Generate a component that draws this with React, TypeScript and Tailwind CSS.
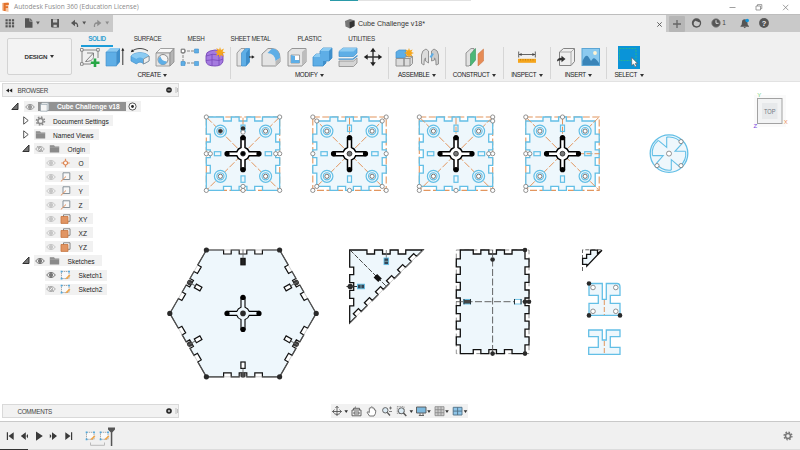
import React from "react";

type P = [number, number];
const BLUE = "#63bfe6";
const ORANGE = "#e2965f";
const FILL = "#eef7fc";

/* ---------- geometry helpers ---------- */

// Points along a straight edge with rectangular notches; positive depth cuts to the right of travel.
function edge(a: P, b: P, at: number[], w: number, depth: number): P[] {
  const len = Math.hypot(b[0] - a[0], b[1] - a[1]);
  const ux = (b[0] - a[0]) / len;
  const uy = (b[1] - a[1]) / len;
  const pt = (t: number, d: number): P => [a[0] + ux * t - uy * d, a[1] + uy * t + ux * d];
  const out: P[] = [a];
  at.forEach((c) => {
    const m = len / 2 + c;
    out.push(pt(m - w / 2, 0), pt(m - w / 2, depth), pt(m + w / 2, depth), pt(m + w / 2, 0));
  });
  return out;
}
const str = (p: P[]) => p.map((q) => q[0].toFixed(2) + "," + q[1].toFixed(2)).join(" ");
const THREE = [-15.6, 0, 15.6];

function Ring({ x, y, r = 2.1 }: { x: number; y: number; r?: number }) {
  return <circle cx={x} cy={y} r={r} fill="#fff" stroke="#777" strokeWidth=".8" />;
}
function Dot({ x, y, r = 2.3 }: { x: number; y: number; r?: number }) {
  return <circle cx={x} cy={y} r={r} fill="#2a2a2a" />;
}

function Cross({ x, y, thin }: { x: number; y: number; thin?: boolean }) {
  return (
    <g transform={`translate(${x} ${y})`}>
      <path
        d="M-2-16V-6.2A6.5 6.5 0 0 0-6.2-2H-16V2H-6.2A6.5 6.5 0 0 0-2 6.2V16H2V6.2A6.5 6.5 0 0 0 6.2 2H16V-2H6.2A6.5 6.5 0 0 0 2-6.2V-16Z"
        fill={thin ? FILL : "#fff"}
        stroke="#000"
        strokeWidth={thin ? 1.1 : 1.5}
      />
      <circle cx="0" cy="-16" r="2.6" />
      <circle cx="0" cy="16" r="2.6" />
      <circle cx="-16" cy="0" r="2.6" />
      <circle cx="16" cy="0" r="2.6" />
    </g>
  );
}

type PlateProps = { x: number; inset: [number, number, number, number]; rings: P[]; dark?: boolean };

// Square plate: inset gives the side offsets (top, right, bottom, left); inset sides carry outward tabs.
function Plate({ x, inset, rings, dark }: PlateProps) {
  const [t, r, b, l] = inset;
  const L = -36.7 + l;
  const R = 36.7 - r;
  const T = -36.7 + t;
  const B = 36.7 - b;
  // Notches stay centred on the plate even where one end of a side is inset.
  const mk = (a: P, c: P, ins: number, shift: number) =>
    edge(a, c, THREE.map((v) => v + shift), 7.8, ins ? -4 : 4);
  const pts = [
    ...mk([L, T], [R, T], t, -(L + R) / 2),
    ...mk([R, T], [R, B], r, -(T + B) / 2),
    ...mk([R, B], [L, B], b, (L + R) / 2),
    ...mk([L, B], [L, T], l, (T + B) / 2),
  ];
  return (
    <g transform={`translate(${x} 153.7)`}>
      <rect x="-36.7" y="-36.7" width="73.4" height="73.4" fill="none" stroke={ORANGE} strokeWidth="1.1" strokeDasharray="7 2.5" />
      <polygon points={str(pts)} fill={FILL} stroke={BLUE} strokeWidth="1.3" />
      <path d="M-36-36L36 36M36-36L-36 36M0-36V-8" stroke={ORANGE} strokeWidth="1" strokeDasharray="7 2" fill="none" />
      {l === 0 && r > 0 && <path d="M8 0H37" stroke={ORANGE} strokeWidth="1" strokeDasharray="6 2" />}
      {[[-22.6, -22.6], [22.6, -22.6], [-22.6, 22.6], [22.6, 22.6]].map(([cx, cy], i) => (
        <g key={i}>
          <circle cx={cx} cy={cy} r="6" fill={FILL} stroke={BLUE} strokeWidth="1.2" />
          <circle cx={cx} cy={cy} r="3.6" fill={FILL} stroke={BLUE} strokeWidth="1.1" />
          <circle cx={cx} cy={cy} r="2.1" fill={dark && i === 0 ? "#333" : "#fff"} stroke="#666" strokeWidth=".9" />
        </g>
      ))}
      <g fill="none" stroke={BLUE} strokeWidth="1.2">
        <rect x="-28.6" y="-2" width="6.4" height="4" />
        <rect x="22.2" y="-2" width="6.4" height="4" />
        <rect x="-2" y="-28.6" width="4" height="6.4" />
        <rect x="-2" y="22.2" width="4" height="6.4" />
      </g>
      <Cross x={0} y={0} />
      <circle r="2.4" fill={dark ? "#000" : "#777"} stroke="#222" strokeWidth=".8" />
      {dark && <Dot x={0} y={-25.3} r={2.2} />}
      {rings.map(([a, c], i) => (
        <Ring key={i} x={a} y={c} />
      ))}
    </g>
  );
}

function Hexagon() {
  const s = 36.6;
  const h = 63.4;
  const v: P[] = [[-s, -h], [s, -h], [73.2, 0], [s, h], [-s, h], [-73.2, 0]];
  const pts = v.flatMap((p, i) => edge(p, v[(i + 1) % 6], THREE, 7.6, 4));
  return (
    <g transform="translate(243 313.4)">
      <polygon points={str(pts)} fill={FILL} stroke="#111" strokeWidth="1.2" />
      <polygon points={str(v)} fill="none" stroke="#999" strokeWidth=".5" />
      {[0, 60, 120, 180, 240, 300].map((a) => (
        <g key={a} transform={`rotate(${a})`}>
          <rect x="-2.1" y="-55" width="4.2" height="6.4" fill={a === 0 ? "#222" : "#fff"} stroke="#111" strokeWidth="1.2" />
          {a !== 0 && <circle cx="0" cy="-61.5" r="2.7" fill="#3a3a3a" />}
          <path d="M0-64V-55" stroke="#666" strokeWidth=".9" />
        </g>
      ))}
      {v.map((p, i) => (
        <Dot key={i} x={p[0]} y={p[1]} r={2.6} />
      ))}
      <Cross x={0} y={0} thin />
      <Dot x={0} y={0} r={2.8} />
    </g>
  );
}

function Triangle() {
  const pts = [
    ...edge([349.7, 250], [423, 250], THREE, 7.6, 4),
    ...edge([423, 250], [349.7, 323], [-39, -23.4, -7.8, 7.8, 23.4, 39], 7.2, 4),
    ...edge([349.7, 323], [349.7, 250], THREE, 7.6, 4),
  ];
  return (
    <g>
      <polygon points={str(pts)} fill={FILL} stroke="#111" strokeWidth="1.3" />
      <path d="M423 250L349.7 323" stroke="#aaa" strokeWidth=".6" />
      <path d="M350 250L386 286" stroke="#333" strokeWidth=".9" strokeDasharray="5 1.5" />
      <path d="M386.3 250V258" stroke="#777" strokeWidth=".9" />
      <rect x="384" y="258" width="4.6" height="6.6" fill="#345" stroke={BLUE} strokeWidth=".9" />
      <rect x="357.5" y="284.2" width="7" height="4.6" fill="#345" stroke={BLUE} strokeWidth=".9" />
      <path d="M384.5 261.3H388M361 284.5V288.5" stroke="#9cc" strokeWidth=".7" />
      <Dot x={350.3} y={286.5} r={2.7} />
      <path d="M346.5 286.5H357" stroke="#333" strokeWidth="1" />
      <rect x="-3.3" y="-2.5" width="6.6" height="5" fill="#111" transform="translate(377.7 278) rotate(45)" />
    </g>
  );
}

function Panel() {
  const side = [-39, -23.4, -7.8, 7.8, 23.4, 39];
  const pts = [
    ...edge([460.3, 250], [525, 250], THREE, 7.6, 4),
    ...edge([525, 250], [525, 353.6], side, 8, -4),
    ...edge([525, 353.6], [460.3, 353.6], THREE, 7.6, 4),
    ...edge([460.3, 353.6], [460.3, 250], side, 8, -4),
  ];
  return (
    <g>
      <rect x="456.3" y="250" width="72.7" height="103.6" fill="none" stroke="#777" strokeWidth=".8" strokeDasharray="5 3" />
      <polygon points={str(pts)} fill={FILL} stroke="#111" strokeWidth="1.3" />
      <path d="M492.6 250V353M456 301.7H529" stroke="#555" strokeWidth=".9" strokeDasharray="7 2.5" />
      <rect x="463.8" y="299.4" width="6.8" height="4.6" fill="#444" stroke={BLUE} strokeWidth=".9" />
      <rect x="514.4" y="299.4" width="6.8" height="4.6" fill="#fff" stroke={BLUE} strokeWidth=".9" />
      <path d="M464 299V304.3M470.5 299V304.3M514.5 299V304.3M521 299V304.3" stroke="#222" strokeWidth=".9" />
      {[[492.6, 259.5], [525, 250], [525, 353.6], [492.6, 353.6], [525, 301.7], [529, 301.7]].map(([x, y], i) => (
        <Dot key={i} x={x} y={y} />
      ))}
    </g>
  );
}

function Disc() {
  return (
    <g transform="translate(669 153.6)" fill="none" stroke={BLUE} strokeWidth="1.3">
      <circle r="18.8" fill={FILL} />
      <g strokeWidth="1.1">
        <path d="M-2.3-16.5V-6.3L-10.7-13.3M16.6-2.3H6L13-10M2.3 16.5V6L10.5 13M-16.6 2H-5.8L-12.8 10" />
        <path d="M-2.3-16.5A16.7 16.7 0 0 1 13-10M16.6-2.3A16.7 16.7 0 0 1 10.5 13M2.3 16.5A16.7 16.7 0 0 1-12.8 10M-16.6 2A16.7 16.7 0 0 1-10.7-13.3" />
      </g>
      <Ring x={0} y={0} r={2.5} />
      <Ring x={12} y={-12} />
      <Ring x={12} y={12} />
      <Ring x={-12} y={12} />
    </g>
  );
}

function SmallParts() {
  return (
    <g>
      <path d="M582.5 271V249.8H602" fill="none" stroke="#555" strokeWidth=".9" strokeDasharray="4 2" />
      <path d="M582.6 258.4H586.6V254.3H590.6V250.2H597.5V253.6L602 250.2L586.8 266.2V264.4H582.6Z" fill={FILL} stroke="#111" strokeWidth="1.3" />
      <g fill={FILL} stroke={BLUE} strokeWidth="1.3">
        <path d="M589 283.5H602.3V299.3H606.3V283.5H617Q620 283.5 620 287V295.3H610.3V303.3H620V315.4H589V303.3H598.3V295.3H589Z" />
        <path d="M588.7 330H602.3V340H606.3V330H620V336.7H610.3V347.3H620V354.3H588.7V347.3H598.3V336.7H588.7Z" />
      </g>
      <path d="M604.3 300V315M604.3 341V354" stroke={ORANGE} strokeWidth="1" strokeDasharray="5 2" />
      <Ring x={593} y={287.5} r={2.3} />
      <Ring x={615.8} y={287.5} r={2.3} />
      <Ring x={593} y={311.3} r={2.3} />
      <Ring x={615.8} y={311.3} r={2.3} />
      <Dot x={589} y={283.5} />
      <Dot x={589} y={315.4} />
      <Dot x={620} y={315.4} />
    </g>
  );
}

function ViewCube() {
  return (
    <g fontFamily="Liberation Sans, sans-serif">
      <rect x="754" y="95" width="32" height="32" fill="#fafafa" />
      <rect x="757.5" y="98.5" width="24.5" height="25" fill="#f2f3f4" stroke="#a2a2a2" strokeWidth="1" />
      <rect x="762" y="103" width="15.5" height="16" fill="#e7e9eb" />
      <text x="764" y="113.7" fontSize="6.5" fill="#6f777e" textLength="11.5" lengthAdjust="spacingAndGlyphs">TOP</text>
      <text x="757.2" y="97.3" fontSize="6" fill="#74d380">Y</text>
      <text x="783.8" y="124" fontSize="6" fill="#ea935f">X</text>
      <text x="753.6" y="127.5" fontSize="6" fill="#7b45e0">Z</text>
    </g>
  );
}

function Drawing() {
  return (
    <svg className="absolute inset-0" width="800" height="339" viewBox="0 82 800 339">
      <Plate
        x={243}
        inset={[0, 0, 0, 0]}
        dark
        rings={[[-36.7, -36.7], [36.7, -36.7], [-36.7, 36.7], [36.7, 36.7], [-36.7, 0], [-32.7, 0], [36.7, 0], [32.7, 0], [0, 32.7], [0, 36.7], [0, -21.5]]}
      />
      <Plate
        x={349.5}
        inset={[4, 4, 4, 4]}
        rings={[[-36.7, -36.7], [36.7, -36.7], [-36.7, 36.7], [36.7, 36.7], [-32.7, -32.7], [32.7, -32.7], [-32.7, 32.7], [32.7, 32.7], [-36.7, 0], [36.7, 0], [0, 36.7]]}
      />
      <Plate
        x={456}
        inset={[4, 0, 4, 0]}
        rings={[[-36.7, -36.7], [36.7, -36.7], [36.7, -32.7], [-36.7, 32.7], [-36.7, 36.7], [36.7, 36.7], [32.7, 0], [36.7, 0], [0, 36.7]]}
      />
      <Plate
        x={562.5}
        inset={[4, 4, 4, 0]}
        rings={[[-36.7, -36.7], [0, -36.7], [-36.7, 0], [-32.7, 0], [-36.7, 32.7], [-36.7, 36.7]]}
      />
      <Disc />
      <Hexagon />
      <Triangle />
      <Panel />
      <SmallParts />
      <ViewCube />
    </svg>
  );
}

/* ---------- toolbar icons (20 x 20) ---------- */

const G1 = "#e4e4e4";
const GS = "#8b8b8b";
const B1 = "#5eaee6";
const B2 = "#3f8fcb";
const B3 = "#8ccbf2";

const ICONS: Record<string, React.ReactNode> = {
  sketch: (
    <>
      <path d="M2 3V17H11M2 3H18V11" fill="none" stroke="#777" strokeWidth=".9" />
      <path d="M.5 1.5h2.6v2.6H.5zM16.7 1.5h2.6v2.6h-2.6zM.5 15.7h2.6v2.6H.5z" fill="#fff" stroke="#666" strokeWidth=".7" />
      <path d="M5.5 14.5L13.5 6V9.5C13.5 12.5 10.5 14.5 5.5 14.5ZM7 6H13.5" fill="none" stroke="#777" strokeWidth=".9" />
      <path d="M15 11.5V20M10.8 15.8H19.5" stroke="#27a745" strokeWidth="2.6" />
    </>
  ),
  extrude: (
    <>
      <path d="M1 5L5 1H15L11.5 5Z" fill={B3} />
      <path d="M1 5H11.5V19H1Z" fill={B1} stroke={B2} strokeWidth=".6" />
      <path d="M11.5 5L15 1V15L11.5 19Z" fill={B2} />
      <path d="M17.8 18V3" stroke="#333" strokeWidth="1" />
      <path d="M17.8 .8L16.3 3.8H19.3Z" fill="#222" />
    </>
  ),
  revolve: (
    <>
      <path d="M1 9C5 4.5 15 4.5 19 9V14L13.5 17C12 14.6 8 14.6 6.5 17L1 14Z" fill={B1} stroke={B2} strokeWidth=".7" />
      <path d="M1 9C5 4.5 15 4.5 19 9L13.5 12C12 10 8 10 6.5 12Z" fill={B3} />
      <path d="M13.5 12L19 9V14L13.5 17Z" fill="#eee" stroke="#777" strokeWidth=".6" />
      <path d="M2 4C7 .7 13 .7 18 4" fill="none" stroke="#333" strokeWidth=".9" />
      <path d="M.8 5.3L2 2.3L4.2 4.6Z" fill="#222" />
    </>
  ),
  hole: (
    <>
      <path d="M1 6L5.5 1.5H19L15 6Z" fill="#f7f7f7" stroke={GS} strokeWidth=".8" />
      <path d="M1 6H15V19H1Z" fill={G1} stroke={GS} strokeWidth=".8" />
      <path d="M15 6L19 1.5V15L15 19Z" fill="#b5b5b5" stroke={GS} strokeWidth=".8" />
      <circle cx="8" cy="12.5" r="5" fill="#f5f5f5" stroke="#888" />
      <path d="M5.5 9.2A4.5 4.5 0 1 0 12 14.4Q6 14 5.5 9.2Z" fill={B1} />
    </>
  ),
  pattern: (
    <>
      <path d="M3 4V16M3 4H17M3 16H17" stroke="#888" strokeDasharray="3 1" />
      <path d="M1.2 2.2h3.6v3.6H1.2z" fill="#fff" stroke="#666" />
      <path d="M14.5 2h4v4h-4zM14.5 14.5h4v4h-4zM1 14.5h4v4H1z" fill={B1} stroke={B2} strokeWidth=".6" />
    </>
  ),
  form: (
    <>
      <path d="M1 9Q1 5 5 4L10 3Q17 3 18 8V14Q17 19 10 19Q1 19 1 14Z" fill="#a57be0" stroke="#7747b8" strokeWidth=".9" />
      <path d="M1 9Q8 6 14 8L18 7L14 8V18" fill="none" stroke="#7747b8" strokeWidth=".8" />
      <path d="M7 7V19M1 13.5Q8 12 14 13.5L18 12" stroke="#7747b8" strokeWidth=".8" fill="none" />
      <path d="M15 0L16 3L19 1.5L17.6 4.6L20.5 5.7L17.5 6.6L18.8 9.7L15.8 8L14.8 10.8L13.8 7.8L10.8 9L12.4 6L9.7 4.8L12.6 4L11.3 1L14.2 2.8Z" fill="#f5a51c" />
    </>
  ),
  press: (
    <>
      <path d="M1 6L5 1.5H9V15L5 19H1Z" fill={G1} stroke={GS} strokeWidth=".8" />
      <path d="M5.5 6L9.5 1.5H13.5V15L10 19H5.5Z" fill={B1} stroke={B2} strokeWidth=".7" />
      <path d="M10 6L13.5 1.5V15L10 19Z" fill={B2} />
      <path d="M13 10H16.5" stroke="#222" strokeWidth="1" />
      <path d="M15.8 8.2L18.6 10L15.8 11.8Z" fill="#222" />
    </>
  ),
  fillet: (
    <>
      <path d="M1 7L7 1.5H11Q19 2 19 11V15L14.5 19H1Z" fill={G1} stroke={GS} strokeWidth=".9" />
      <path d="M6.5 6L11 1.5Q19 2 19 11L14.5 14Q14 6.5 6.5 6Z" fill={B1} />
      <path d="M14.5 14L19 11V15L14.5 19Z" fill="#b9b9b9" />
    </>
  ),
  shell: (
    <>
      <path d="M1 5L5 1.5H19V15L15 19H1Z" fill={G1} stroke={GS} strokeWidth=".9" />
      <path d="M15 5L19 1.5V15L15 19Z" fill="#bdbdbd" />
      <path d="M4 8H12.5V16H4Z" fill="#fff" stroke={GS} strokeWidth=".8" />
      <path d="M4 8L8 9V13H12.5V16H4Z" fill={B1} />
    </>
  ),
  combine: (
    <>
      <path d="M1 10L4 7H8V4L11 1H20V11L17 14H14V16L11 19H1Z" fill={B1} stroke={B2} strokeWidth=".8" />
      <path d="M1 10L4 7H8V4L11 1H20L17 4H8V10Z" fill={B3} />
      <path d="M17 4L20 1V11L17 14ZM11 14H14V16L11 19Z" fill={B2} />
    </>
  ),
  split: (
    <>
      <path d="M1 4.5L5 1H19V6L15.5 9.5H1Z" fill={B1} stroke={B2} strokeWidth=".7" />
      <path d="M1 4.5L5 1H19L15.5 4.5Z" fill={B3} />
      <path d="M.5 12.2H15L19.5 8.5" stroke={B2} strokeWidth="1.2" fill="none" />
      <path d="M1 14H15.5L19 11V16L15.5 19.5H1Z" fill="#d5d5d5" stroke={GS} strokeWidth=".8" />
    </>
  ),
  move: (
    <>
      <path d="M10 3V17M3 10H17" stroke="#333" strokeWidth="1.4" />
      <path d="M10 .8L12.8 4.7H7.2ZM10 19.2L12.8 15.3H7.2ZM.8 10L4.7 7.2V12.8ZM19.2 10L15.3 7.2V12.8Z" fill="#222" />
    </>
  ),
  component: (
    <>
      <path d="M2 5L5 3H12V11H2Z" fill={B1} stroke={B2} strokeWidth=".7" />
      <path d="M2 11.5H10V19H2ZM10 11.5L12 9.5H18.5V16.5L16 19H10Z" fill="#dcdcdc" stroke={GS} strokeWidth=".9" />
      <path d="M10 11.5H16V19M16 11.5L18.5 9.5" fill="none" stroke={GS} strokeWidth=".9" />
      <path d="M15 1L15.9 3.6L18.6 2.4L17.3 5L20 6L17.3 7L18.5 9.6L15.9 8.4L15 11L14.1 8.4L11.5 9.6L12.7 7L10 6L12.7 5L11.5 2.4L14.1 3.6Z" fill="#f5a51c" />
    </>
  ),
  joint: (
    <>
      <path d="M1.5 8Q2 3 6 2L8.5 4V16L5.5 14V11Q4 11 4 18L1.5 16.5Z" fill="#ddd" stroke={GS} strokeWidth=".9" />
      <path d="M18.5 8Q18 3 14 2L11.5 4V14L14.5 13V11Q16 11 16 18L18.5 17Z" fill="#ccc" stroke={GS} strokeWidth=".9" />
      <path d="M10.5 10.5L13 6.5" stroke={B1} strokeWidth="2.2" />
    </>
  ),
  plane: (
    <>
      <path d="M1 6L6 1.5H9V14L4 19H1Z" fill="#e1e1e1" stroke={GS} strokeWidth=".9" />
      <path d="M5.5 7L10.5 1.5V13L5.5 19Z" fill="#4cb777" stroke="#35945c" strokeWidth=".6" />
      <path d="M13 7L18.5 2V14L13 19Z" fill="#e68b55" stroke="#c96f3b" strokeWidth=".5" />
    </>
  ),
  measure: (
    <>
      <path d="M1.7 4.5V10.5M18.3 4.5V10.5M2 7.5H18" stroke="#555" strokeWidth=".9" />
      <path d="M2 7.5L4.6 6V9ZM18 7.5L15.4 6V9Z" fill="#444" />
      <rect x="1" y="11.8" width="18" height="4" fill="#f5a51c" />
      <path d="M3.5 12v1.5M6 12v1.5M8.5 12v1.5M11 12v1.5M13.5 12v1.5M16 12v1.5" stroke="#b87a10" strokeWidth=".7" />
    </>
  ),
  insert: (
    <>
      <path d="M3.5 5L7.5 1.5H18.5V14.5L15 18.5H3.5Z" fill="#efefef" stroke="#777" strokeWidth=".9" />
      <path d="M3.5 5H15V18.5M15 5L18.5 1.5" fill="none" stroke="#999" strokeWidth=".8" />
      <path d="M1 14.5Q1 10.8 5.5 10.8V8.7L9.5 12L5.5 15.3V13.3Q3 13.2 1 14.5Z" fill="#333" />
    </>
  ),
  image: (
    <>
      <rect x="1" y="1.5" width="17.5" height="17" fill="#8bcaf0" stroke="#5ba5d4" />
      <path d="M1.5 14Q5 6 7.5 10L10 14L12 11.5Q14 10 18 16V18H1.5Z" fill="#3984b8" />
      <circle cx="14" cy="6" r="1.9" fill="#fff4d5" />
    </>
  ),
};

function Icon({ name }: { name: string }) {
  return (
    <svg width="20" height="20" viewBox="0 0 20 20" className="shrink-0 overflow-visible">
      {ICONS[name]}
    </svg>
  );
}

function SelectIcon() {
  return (
    <div className="h-[23px] w-[22px] bg-[#0a94d8]">
      <svg width="22" height="23" viewBox="0 0 22 23">
        <rect x="1.5" y="2.5" width="16.5" height="12" fill="none" stroke="#2db58b" strokeWidth=".9" strokeDasharray="2 1" />
        <path d="M13.7 11.5V19.6L15.6 18L17 20.9L18.5 20.1L17.2 17.4H19.6Z" fill="#fff" stroke="#555" strokeWidth=".6" />
      </svg>
    </div>
  );
}

function Caret() {
  return (
    <svg width="4" height="3" viewBox="0 0 4 3" className="shrink-0">
      <path d="M0 0H4L2 3Z" fill="#333" />
    </svg>
  );
}

function Group({ label, width, icons, gap, pl = "" }: { label: string; width: string; icons: string[]; gap: string; pl?: string }) {
  return (
    <div className={"flex h-[32px] flex-col items-center justify-between border-r border-[#d6d6d6] " + width + " " + pl}>
      <div className={"flex h-5 items-center " + gap}>
        {icons.map((n) => (
          <Icon key={n} name={n} />
        ))}
      </div>
      <div className="flex items-center gap-[2.5px] text-[6.3px] leading-[8px] tracking-[-0.3px] whitespace-nowrap text-[#222]">
        {label}
        <Caret />
      </div>
    </div>
  );
}

/* ---------- application bars ---------- */

function TitleBar() {
  return (
    <div className="flex h-[14px] items-center bg-white pl-[2px]">
      <svg width="8" height="10" viewBox="0 0 8 10">
        <path d="M0 1L6.5 0V10L0 8.5Z" fill="#f6c6a4" />
        <path d="M1.5 1H6.8V3H3.7V4.3H6V6.1H3.7V9H1.5Z" fill="#e3722b" />
      </svg>
      <span className="ml-[4px] w-[316px] text-[6.6px] whitespace-nowrap text-[#8b8b8b] [font-family:'Open_Sans',sans-serif]">
        Autodesk Fusion 360 (Education License)
      </span>
      <div className="h-px w-[28px] self-start bg-[#2a9aa8]" />
      <div className="h-px w-[113px] self-start bg-[#e2e2e2]" />
      <svg className="mr-[9px] ml-auto" width="62" height="10" viewBox="729 1 62 10" fill="none" stroke="#777" strokeWidth=".7">
        <path d="M729.5 6.5H735.5M783 3.8L788.3 9.2M788.3 3.8L783 9.2M756 5H760.5V9H756ZM757.5 5V3.6H761.8V7.6H760.7" />
      </svg>
    </div>
  );
}

function TabBar() {
  return (
    <div className="flex h-[18px] border-t border-[#bdbdbd] bg-[#c9c9c9]">
      <svg width="113" height="17" viewBox="0 15 113 17">
        <g fill="#555">
          {[5.5, 8.7, 11.9].map((x) => [19.2, 22.2, 25.2].map((y) => <rect key={x + "-" + y} x={x} y={y} width="2.2" height="2.2" />))}
          <path d="M25 18.3H29.5V21.5H32.5V27.8H25ZM30.2 18.3L32.5 20.8H30.2Z" />
          <path d="M36 21.5H39.8L37.9 24.5ZM82.3 21.5H86.1L84.2 24.5Z" />
          <path d="M51 19H59V27.5H51.8L51 26.7Z" />
          <path d="M71 23L75 19.8V26.2Z" />
        </g>
        <path d="M53 19.3V22.5H57.2V19.3M53.5 27V24.8H56.8V27" fill="#c9c9c9" />
        <path d="M73 23H75Q78 23 77.5 27" fill="none" stroke="#555" strokeWidth="1.3" />
        <g fill="#8c8c8c">
          <path d="M101.3 23L97.3 19.8V26.2ZM105.3 21.5H109.1L107.2 24.5Z" />
          <path d="M99 23H97Q94 23 94.5 27" fill="none" stroke="#8c8c8c" strokeWidth="1.3" />
        </g>
      </svg>
      <div className="flex flex-1 items-center bg-[#f0f0f0] pt-px pl-[232px]">
        <svg width="10" height="10" viewBox="0 0 10 10">
          <path d="M0 2L5 0L9.5 1.5V7L5 9.5L.5 7.5Z" fill="#777" />
          <path d="M4.5 3.2L9.5 1.5V7L4.8 9.5Z" fill="#333" />
        </svg>
        <span className="ml-[3px] text-[7.1px] whitespace-nowrap text-[#333]">Cube Challenge v18*</span>
        <svg className="mr-[4px] ml-auto" width="5" height="5" viewBox="0 0 5 5">
          <path d="M.3 .3L4.7 4.7M4.7 .3L.3 4.7" stroke="#555" strokeWidth=".9" />
        </svg>
      </div>
      <svg width="134" height="17" viewBox="666 15 134 17">
        <rect x="669" y="16" width="16" height="16" rx="1" fill="#b6b6b6" />
        <path d="M677 20V28M673 24H681" stroke="#666" strokeWidth="1.3" />
        <circle cx="696.5" cy="23" r="4.7" fill="#555" />
        <path d="M694 22Q696.5 19 697.5 21.7L700 22.5Q700 26 696.5 26.3Q692.8 25.8 694 22Z" fill="#c9c9c9" />
        <path d="M695.5 18.6L698 20.2L696.2 21.4Z" fill="#555" />
        <circle cx="716" cy="23" r="4.3" fill="#555" stroke="#888" strokeWidth=".8" />
        <path d="M716 20.2V23.3H718.6" fill="none" stroke="#eee" strokeWidth=".9" />
        <text x="722.3" y="25.4" fontSize="6.5" fill="#444" fontFamily="Liberation Sans, sans-serif">1</text>
        <path d="M740.5 26Q742 25 742 22Q742 19.3 744.7 19.3Q747.3 19.3 747.3 22Q747.3 25 749 26V26.7H740.5ZM743.5 27H746L744.7 28.2Z" fill="#555" />
        <circle cx="747.2" cy="20.5" r="1.8" fill="#1096dc" />
        <circle cx="764" cy="23" r="4.9" fill="#555" />
        <text x="761.8" y="25.7" fontSize="7.5" fontWeight="700" fill="#eee" fontFamily="Liberation Sans, sans-serif">?</text>
      </svg>
    </div>
  );
}

const TABS: [string, string][] = [
  ["SURFACE", "w-[50px]"],
  ["MESH", "w-[47px]"],
  ["SHEET METAL", "w-[62px]"],
  ["PLASTIC", "w-[56px]"],
  ["UTILITIES", "w-[48px]"],
];

function Toolbar() {
  return (
    <div className="flex h-[50px] border-b border-[#e2e2e2] bg-[#f0f0f0]">
      <div className="mt-[6px] ml-[7px] flex h-[37px] w-[65px] shrink-0 items-center justify-center gap-[3px] rounded-[2px] border border-[#d3d3d3] bg-[#f3f3f3] text-[6.2px] font-bold tracking-[-0.15px] text-[#333]">
        DESIGN
        <Caret />
      </div>
      <div className="flex flex-col pl-[6px]">
        <div className="flex h-[15px] text-[6.3px] leading-[8px] tracking-[-0.3px] text-[#333]">
          <div className="ml-[3px] flex w-[32px] flex-col items-center justify-between pt-[3px] font-bold text-[#2f9fd0]">
            SOLID
            <div className="h-[2px] w-full bg-[#1c9cd8]" />
          </div>
          <div className="w-[9.5px]" />
          {TABS.map(([t, w]) => (
            <div key={t} className={"pt-[3px] text-center whitespace-nowrap " + w}>
              {t}
            </div>
          ))}
        </div>
        <div className="flex">
          <Group label="CREATE" width="w-[153px]" gap="gap-[5px]" pl="pr-[3px]" icons={["sketch", "extrude", "revolve", "hole", "pattern", "form"]} />
          <Group label="MODIFY" width="w-[158px]" gap="gap-[5.4px]" icons={["press", "fillet", "shell", "combine", "split", "move"]} />
          <Group label="ASSEMBLE" width="w-[57px]" gap="gap-[6px]" icons={["component", "joint"]} />
          <Group label="CONSTRUCT" width="w-[58px]" gap="" icons={["plane"]} />
          <Group label="INSPECT" width="w-[47px]" gap="" icons={["measure"]} />
          <Group label="INSERT" width="w-[56px]" gap="gap-[5px]" icons={["insert", "image"]} />
          <div className="-mt-px flex h-[33px] w-[44px] flex-col items-center justify-between">
            <SelectIcon />
            <div className="flex items-center gap-[2.5px] text-[6.3px] leading-[8px] tracking-[-0.3px] text-[#222]">
              SELECT
              <Caret />
            </div>
          </div>
        </div>
      </div>
    </div>
  );
}

/* ---------- browser tree ---------- */

function Eye({ tone = "#b9b9b9", off }: { tone?: string; off?: boolean }) {
  return (
    <svg width="10" height="8" viewBox="0 0 10 8" className="shrink-0">
      <path d="M.6 4Q5-1.3 9.4 4Q5 9.3 .6 4Z" fill="none" stroke={tone} strokeWidth="1" />
      <circle cx="5" cy="4" r="1.7" fill={off ? "none" : tone} stroke={tone} strokeWidth=".9" />
      {off && <path d="M2 1L8 7" stroke={tone} strokeWidth=".9" />}
    </svg>
  );
}

function Arrow({ open }: { open?: boolean }) {
  return (
    <svg width="8" height="9" viewBox="0 0 8 9" className="shrink-0">
      {open ? (
        <path d="M7 1V7.5H.8Z" fill="#777" stroke="#222" strokeWidth=".9" />
      ) : (
        <path d="M1.7 .8L6.2 4.5L1.7 8.2Z" fill="#fff" stroke="#444" strokeWidth=".9" />
      )}
    </svg>
  );
}

function NodeIcon({ kind }: { kind: string }) {
  return (
    <svg width="11" height="10" viewBox="0 0 11 10" className="shrink-0">
      {kind === "cube" && <path d="M1.5 2.5L3 .8H9.8V7.5L8.2 9.2H1.5ZM1.5 2.5H8.2V9.2M8.2 2.5L9.8 .8" fill="#f6f6f6" stroke="#8a9aa5" strokeWidth=".6" />}
      {kind === "gear" && (
        <>
          <circle cx="5.5" cy="5" r="4" fill="none" stroke="#8a8a8a" strokeWidth="1.5" strokeDasharray="1.6 1.54" />
          <circle cx="5.5" cy="5" r="2.6" fill="none" stroke="#8a8a8a" strokeWidth="1.5" />
        </>
      )}
      {kind === "folder" && (
        <>
          <path d="M.8 1.2H5L6 2.4H10.2V8.6H.8Z" fill="#8a8a8a" />
          <path d="M.8 3.2H10.2" stroke="#bbb" strokeWidth=".5" />
        </>
      )}
      {kind === "point" && (
        <>
          <path d="M5.5 .8V9.2M1.3 5H9.7" stroke="#dd9163" strokeWidth="1.2" />
          <circle cx="5.5" cy="5" r="2" fill="#fff" stroke="#dd8450" strokeWidth="1.2" />
        </>
      )}
      {kind === "axis" && (
        <>
          <path d="M3 .8H9.8V7.5H3Z" fill="#f8f8f8" stroke="#7b8790" strokeWidth=".9" />
          <path d="M.8 9.5L6 4.5" stroke="#e2925e" strokeWidth="1" />
        </>
      )}
      {kind === "plane" && (
        <>
          <path d="M3.5 .8H10V7.3H3.5Z" fill="#fff" stroke="#777" strokeWidth=".9" />
          <path d="M1 2.5H8V9.4H1Z" fill="#e19563" stroke="#c6733e" strokeWidth=".8" />
        </>
      )}
      {kind === "sketch" && <SketchGlyph />}
    </svg>
  );
}

function SketchGlyph() {
  return (
    <>
      <path d="M1.5 1.5H9V8.5H1.5Z" fill="#fafafa" stroke="#888" strokeWidth=".7" strokeDasharray="1.5 .7" />
      <path d="M.7 .7h1.7v1.7H.7zM8.2 .7h1.7v1.7H8.2zM.7 7.7h1.7v1.7H.7z" fill="#4aa9e0" />
      <path d="M5.7 9.3L6.3 7.5L9.3 4.6L10.4 5.7L7.4 8.7Z" fill="#f0a64a" />
    </>
  );
}

type Row = { text: string; kind: string; open?: boolean; level: number; eye?: "on" | "dim" | "off"; w: string };
const ROWS: Row[] = [
  { text: "Document Settings", kind: "gear", level: 1, w: "w-[79px]" },
  { text: "Named Views", kind: "folder", level: 1, w: "w-[65px]" },
  { text: "Origin", kind: "folder", level: 1, open: true, eye: "off", w: "w-[56px]" },
  { text: "O", kind: "point", level: 2, eye: "dim", w: "w-[44px]" },
  { text: "X", kind: "axis", level: 2, eye: "dim", w: "w-[44px]" },
  { text: "Y", kind: "axis", level: 2, eye: "dim", w: "w-[44px]" },
  { text: "Z", kind: "axis", level: 2, eye: "dim", w: "w-[44px]" },
  { text: "XY", kind: "plane", level: 2, eye: "dim", w: "w-[48px]" },
  { text: "XZ", kind: "plane", level: 2, eye: "dim", w: "w-[48px]" },
  { text: "YZ", kind: "plane", level: 2, eye: "dim", w: "w-[48px]" },
  { text: "Sketches", kind: "folder", level: 1, open: true, eye: "on", w: "w-[68px]" },
  { text: "Sketch1", kind: "sketch", level: 2, eye: "on", w: "w-[62px]" },
  { text: "Sketch2", kind: "sketch", level: 2, eye: "off", w: "w-[62px]" },
];

function TreeRow({ row }: { row: Row }) {
  return (
    <div className={"flex h-[14.05px] items-center " + (row.level === 1 ? "pl-[22px]" : "pl-[45px]")}>
      {row.level === 1 && (
        <div className="mr-[4px] flex">
          <Arrow open={row.open} />
        </div>
      )}
      <div className={"flex h-[11px] items-center bg-[#f1f1f1] pl-px " + row.w}>
        {row.eye && (
          <div className="mr-[4px] flex">
            <Eye tone={row.eye === "on" ? "#777" : row.eye === "dim" ? "#c6c6c6" : "#adadad"} off={row.eye === "off"} />
          </div>
        )}
        <NodeIcon kind={row.kind} />
        <span className={"pt-px text-[6.6px] leading-[9px] whitespace-nowrap text-[#222] " + (row.eye ? "ml-[7.5px]" : "ml-[7px]")}>{row.text}</span>
      </div>
    </div>
  );
}

function PanelHeader({ label, plus }: { label: string; plus?: boolean }) {
  return (
    <div className="flex h-[14px] w-[177px] items-center border border-[#d9d9d9] bg-[#f2f2f2] pl-[3px] text-[6.3px] tracking-[-0.3px] text-[#444]">
      <svg width="7" height="5" viewBox="0 0 7 5" className={plus ? "invisible" : ""}>
        <path d="M0 2.5L3 .5V4.5ZM3.2 2.5L6.2 .5V4.5Z" fill="#222" />
      </svg>
      <span className="ml-[4.5px] pt-px leading-[9px]">{label}</span>
      <svg className="ml-auto" width="13" height="8" viewBox="0 0 13 8">
        <circle cx="4" cy="4" r="2.8" fill="#222" />
        <path d={plus ? "M2.8 4H5.2M4 2.8V5.2" : "M2.5 4H5.5"} stroke="#fff" strokeWidth=".8" />
        <path d="M11 1V7M12.5 2V6" stroke="#aaa" strokeWidth=".7" />
      </svg>
    </div>
  );
}

function Browser() {
  return (
    <div className="relative flex flex-col pt-px">
      <div className="pl-[2px]">
        <PanelHeader label="BROWSER" />
      </div>
      <div className="mt-[2.5px] flex h-[14px] items-center pl-[11px]">
        <Arrow open />
        <div className="ml-[5px] flex h-[11px] w-[117px] items-center bg-[#f1f1f1] pl-px">
          <Eye tone="#999" />
          <div className="ml-[3px] flex h-[9.5px] w-[88px] items-center bg-[#929292] pl-px text-[6.6px] font-bold whitespace-nowrap text-white">
            <NodeIcon kind="cube" />
            <span className="ml-[7px] pt-px leading-[8px]">Cube Challenge v18</span>
          </div>
          <svg className="ml-[2px]" width="9" height="9" viewBox="0 0 9 9">
            <circle cx="4.5" cy="4.5" r="3.6" fill="#fff" stroke="#333" strokeWidth=".8" />
            <circle cx="4.5" cy="4.5" r="1.4" fill="#222" />
          </svg>
        </div>
      </div>
      {ROWS.map((r) => (
        <TreeRow key={r.text} row={r} />
      ))}
    </div>
  );
}

function NavBar() {
  return (
    <svg width="137" height="14" viewBox="331 404 137 14" className="bg-[#f1f1f1]" fill="none" stroke="#555" strokeWidth=".9">
      <g fill="#333" stroke="none">
        {[346.2, 411.3, 429, 447, 465.5].map((x) => (
          <path key={x} d={`M${x - 1.8} 410.3H${x + 1.8}L${x} 412.9Z`} />
        ))}
      </g>
      <path d="M332.5 411.5H341.5M337 406.5V416M334.5 413.8Q337 415.2 339.7 413.8M334.5 409.7L332.5 411.5L334.5 413.3M339.5 409.7L341.5 411.5L339.5 413.3M335.5 408L337 406.2L338.5 408" />
      <path d="M352 410H361V415.8H352ZM353.5 410V408.3H359.5V410M354 412H359V414H354ZM354.5 408L356 406.7" />
      <path d="M369.5 416L367 412.3Q368 411 369.3 412.6V408.3Q370.3 407 371 408.3V407.3Q372 406 372.8 407.5V408.3Q374 407.2 374.4 409V410Q375.8 409.4 375.8 411Q375.8 414 374 416Z" fill="#fff" strokeWidth=".8" />
      <circle cx="385.3" cy="410.3" r="2.7" fill="#dcebf4" />
      <path d="M387.2 412.4L390 415.5" strokeWidth="1.4" />
      <path d="M389 408H392M390.5 406.5V409.5M389 411.5H392" strokeWidth=".7" />
      <path d="M397.3 406.7H404V413.5H397.3Z" strokeDasharray="1.2 1" strokeWidth=".7" />
      <circle cx="401.3" cy="410.8" r="3" fill="#dcebf4" />
      <path d="M403.5 413L406.3 416" strokeWidth="1.4" />
      <path d="M416.5 407H426V413H416.5Z" fill="#7db9de" />
      <path d="M420 413.3V415.3M423 413.3V415.3M418.8 415.5H424" />
      <path d="M435 406.7H444V415.7H435ZM438 406.7V415.7M441 406.7V415.7M435 409.7H444M435 412.7H444" fill="#ccc" stroke="#888" strokeWidth=".8" />
      <path d="M453.2 407.3H462V415H453.2ZM457.6 407.3V415M453.2 411.1H462" fill="#8fc5e8" stroke="#4f7187" />
    </svg>
  );
}

function Timeline() {
  return (
    <div className="flex h-[29px] flex-col border-t border-[#c9c9c9] bg-[#f0f0f0]">
      <div className="flex h-[27px] items-center justify-between">
        <svg width="130" height="27" viewBox="0 422 130 27">
          <g fill="#3a3a3a">
            <path d="M6.8 432.3H8V440H6.8ZM13.7 432.3V440L8.5 436.1ZM25.8 432.3V440L20.8 436.1ZM28 434V438.3L26.6 436.8V435.4ZM36 431.5L42.8 436.1L36 440.8ZM52 432.3V440L57 436.1ZM49.8 434V438.3L51.2 436.8V435.4ZM65.3 432.3V440L70.5 436.1ZM71 432.3H72.2V440H71Z" />
          </g>
          <g transform="translate(85 430.8)">
            <SketchGlyph />
          </g>
          <g transform="translate(99 430.8)">
            <SketchGlyph />
          </g>
          <path d="M90.5 442.5V445.3H104.5V442.5" fill="none" stroke="#bbb" />
          <path d="M108 427.5H115V429.5L112.3 432.5V446H110.8V432.5L108 429.5Z" fill="#555" />
        </svg>
        <svg className="mr-[7px]" width="10" height="10" viewBox="0 0 10 10">
          <circle cx="5" cy="5" r="3.9" fill="none" stroke="#777" strokeWidth="1.3" strokeDasharray="1.6 1.46" />
          <circle cx="5" cy="5" r="2.5" fill="none" stroke="#777" strokeWidth="1.5" />
        </svg>
      </div>
      <div className="flex h-px bg-[#dcdcdc]">
        <div className="w-[28px] bg-[#333]" />
      </div>
    </div>
  );
}

export default function App() {
  return (
    <div className="flex h-[450px] w-[800px] flex-col overflow-hidden bg-white [font-family:'Liberation_Sans',Arial,sans-serif]">
      <TitleBar />
      <TabBar />
      <Toolbar />
      <div className="relative flex h-[339px] flex-col justify-between overflow-hidden">
        <Drawing />
        <Browser />
        <div className="relative flex items-center pb-[3px] pl-[2px]">
          <PanelHeader label="COMMENTS" plus />
          <div className="ml-[152px] flex">
            <NavBar />
          </div>
        </div>
      </div>
      <Timeline />
    </div>
  );
}
